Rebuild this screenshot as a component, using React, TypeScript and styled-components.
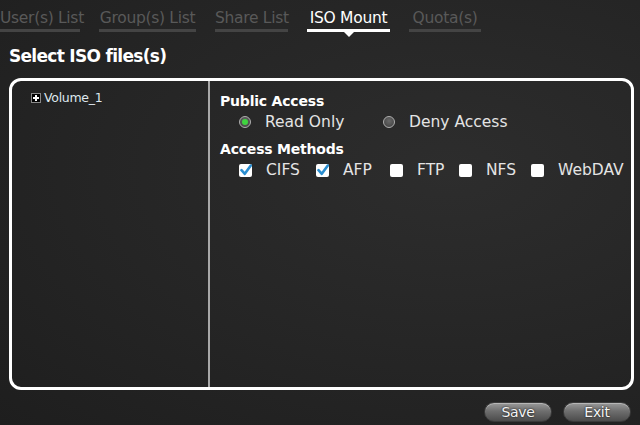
import React from "react";
import styled, { createGlobalStyle } from "styled-components";

const Global = createGlobalStyle`
  html, body { margin: 0; padding: 0; background: #222; }
  * { box-sizing: border-box; }
`;

const Page = styled.div`
  width: 640px;
  height: 425px;
  overflow: hidden;
  font-family: "DejaVu Sans", "Liberation Sans", sans-serif;
  color: #fff;
  background:
    radial-gradient(ellipse at 70% 40%, #2d2d2d 0%, #252525 55%, #1e1e1e 100%);
  display: flex;
  flex-direction: column;
`;

const TabBar = styled.div`
  display: flex;
  gap: 19px;
  height: 36px;
  padding-top: 6px;
`;

const Tab = styled.div<{ $w: number; $active?: boolean }>`
  position: relative;
  width: ${(p) => p.$w}px;
  height: 26px;
  font-size: 15.5px;
  letter-spacing: -0.3px;
  line-height: 25px;
  text-align: center;
  color: ${(p) => (p.$active ? "#ffffff" : "#595959")};
  border-bottom: 3px solid ${(p) => (p.$active ? "#ffffff" : "#444444")};
  white-space: nowrap;
  &::after {
    content: "";
    display: ${(p) => (p.$active ? "block" : "none")};
    position: absolute;
    left: 50%;
    bottom: -8px;
    margin-left: -5px;
    border-left: 5px solid transparent;
    border-right: 5px solid transparent;
    border-top: 5px solid #ffffff;
  }
`;

const Title = styled.h1`
  margin: 9px 0 0 9px;
  font-size: 17px;
  font-weight: bold;
  letter-spacing: -0.7px;
  line-height: 22px;
  color: #ffffff;
`;

const Panel = styled.div`
  margin: 11px 0 0 9px;
  width: 625px;
  height: 312px;
  border: 3px solid #ffffff;
  border-radius: 12px;
  display: flex;
`;

const TreeCol = styled.div`
  width: 200px;
  border-right: 2px solid #a8a8a8;
  padding: 9px 0 0 19px;
`;

const TreeItem = styled.div`
  display: flex;
  align-items: center;
  gap: 3px;
  font-size: 12.5px;
  letter-spacing: -0.3px;
  color: #dfe8ee;
`;

const PlusBox = styled.span`
  width: 10px;
  height: 10px;
  border: 1px solid #888;
  background: #000;
  position: relative;
  &::before, &::after {
    content: "";
    position: absolute;
    background: #fff;
  }
  &::before { left: 1px; top: 3px; width: 6px; height: 2px; }
  &::after { left: 3px; top: 1px; width: 2px; height: 6px; }
`;

const OptionsCol = styled.div`
  flex: 1;
  padding: 11px 0 0 10px;
  display: flex;
  flex-direction: column;
`;

const SectionLabel = styled.div`
  font-size: 14px;
  font-weight: bold;
  letter-spacing: -0.2px;
  line-height: 18px;
  color: #ffffff;
`;

const OptionRow = styled.div<{ $gapAfter: number }>`
  display: flex;
  align-items: center;
  padding-left: 19px;
  height: 22px;
  margin-top: 1px;
  margin-bottom: ${(p) => p.$gapAfter}px;
`;

const Option = styled.label<{ $w: number }>`
  display: flex;
  align-items: center;
  width: ${(p) => p.$w}px;
  font-size: 15.5px;
  color: #e4e4e4;
  white-space: nowrap;
`;

const Radio = styled.span<{ $on?: boolean }>`
  width: 12px;
  height: 12px;
  border-radius: 50%;
  border: 1px solid #b0b0b0;
  background: radial-gradient(circle at 50% 40%, #6a6a6a, #3c3c3c);
  display: flex;
  align-items: center;
  justify-content: center;
  margin-right: 14px;
  &::after {
    content: "";
    display: ${(p) => (p.$on ? "block" : "none")};
    width: 6px;
    height: 6px;
    border-radius: 50%;
    background: #3fd43f;
  }
`;

const Check = styled.span`
  width: 13px;
  height: 13px;
  border-radius: 2px;
  background: #ffffff;
  margin-right: 14px;
  display: flex;
  align-items: center;
  justify-content: center;
`;

const Footer = styled.div`
  display: flex;
  justify-content: flex-end;
  gap: 11px;
  padding: 12px 9px 0 0;
`;

const PillButton = styled.button`
  width: 68px;
  height: 20px;
  border-radius: 10px;
  border: 1px solid #3a3a3a;
  background: linear-gradient(#9a9a9a 0%, #6e6e6e 45%, #4c4c4c 100%);
  color: #f4f4f4;
  font-family: "DejaVu Sans", sans-serif;
  font-size: 14px;
  letter-spacing: -0.3px;
  padding: 0;
  text-shadow: 0 0 2px #000;
  box-shadow: inset 0 1px 0 rgba(255,255,255,0.3);
`;

const CheckMark = () => (
  <svg width="12" height="12" viewBox="0 0 12 12">
    <path d="M1.5 6.2 L4.8 9.8 L10.8 1.6" fill="none" stroke="#2a8ed0" strokeWidth="2.6" strokeLinecap="round" strokeLinejoin="round" />
  </svg>
);

const tabs: [string, number, boolean?][] = [
  ["User(s) List", 80],
  ["Group(s) List", 97],
  ["Share List", 73],
  ["ISO Mount", 83, true],
  ["Quota(s)", 72],
];

const methods: [string, boolean, number][] = [
  ["CIFS", true, 77],
  ["AFP", true, 74],
  ["FTP", false, 69],
  ["NFS", false, 72],
  ["WebDAV", false, 100],
];

export default function App() {
  return (
    <>
      <Global />
      <Page>
        <TabBar>
          {tabs.map(([t, w, a]) => (
            <Tab key={t} $w={w} $active={a}>{t}</Tab>
          ))}
        </TabBar>
        <Title>Select ISO files(s)</Title>
        <Panel>
          <TreeCol>
            <TreeItem><PlusBox />Volume_1</TreeItem>
          </TreeCol>
          <OptionsCol>
            <SectionLabel>Public Access</SectionLabel>
            <OptionRow $gapAfter={7}>
              <Option $w={144}><Radio $on />Read Only</Option>
              <Option $w={140}><Radio />Deny Access</Option>
            </OptionRow>
            <SectionLabel>Access Methods</SectionLabel>
            <OptionRow $gapAfter={0}>
              {methods.map(([m, c, w]) => (
                <Option key={m} $w={w}><Check>{c && <CheckMark />}</Check>{m}</Option>
              ))}
            </OptionRow>
          </OptionsCol>
        </Panel>
        <Footer>
          <PillButton>Save</PillButton>
          <PillButton>Exit</PillButton>
        </Footer>
      </Page>
    </>
  );
}
